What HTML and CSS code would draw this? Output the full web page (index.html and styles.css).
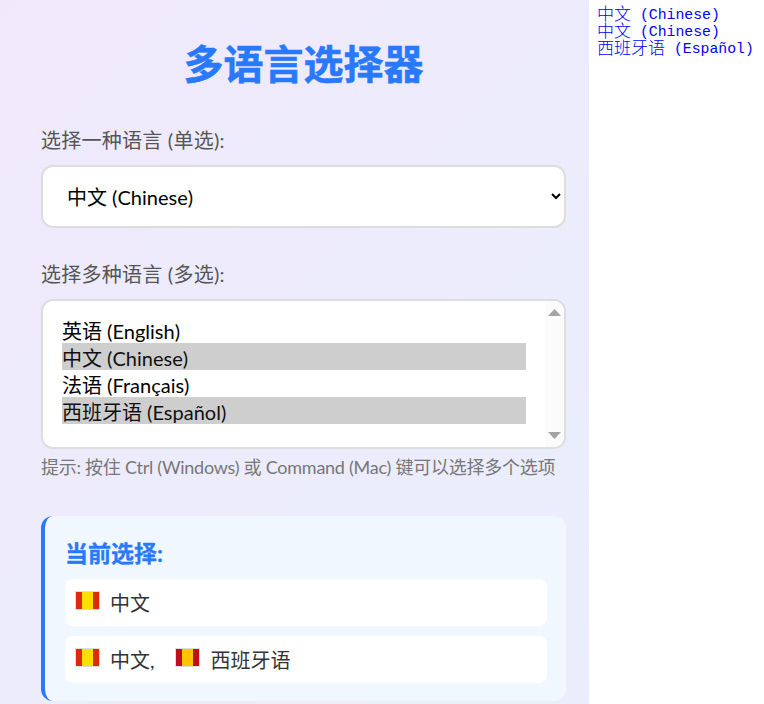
FILE: index.html
```html
<!DOCTYPE html>
<html lang="zh">
<head>
<meta charset="utf-8">
<title>多语言选择器</title>
<link rel="stylesheet" href="styles.css">
</head>
<body>
<main class="panel">
  <h1 class="title">多语言选择器</h1>
  <div class="group">
    <label class="label" for="single">选择一种语言 (单选):</label>
    <select class="field single" id="single">
      <option>英语 (English)</option>
      <option selected>中文 (Chinese)</option>
      <option>法语 (Français)</option>
      <option>西班牙语 (Español)</option>
    </select>
  </div>
  <div class="group">
    <label class="label" for="multi">选择多种语言 (多选):</label>
    <div class="multi-wrap">
      <select class="field multi" id="multi" multiple>
        <option>英语 (English)</option>
        <option selected>中文 (Chinese)</option>
        <option>法语 (Français)</option>
        <option selected>西班牙语 (Español)</option>
      </select>
      <div class="scrollbar" aria-hidden="true">
        <svg class="arrow" viewBox="0 0 13 7"><path d="M6.5 0 13 7H0z"/></svg>
        <svg class="arrow" viewBox="0 0 13 7"><path d="M0 0h13L6.5 7z"/></svg>
      </div>
    </div>
    <p class="hint">提示: 按住 Ctrl (Windows) 或 Command (Mac) 键可以选择多个选项</p>
  </div>
  <section class="result">
    <h2 class="result-title">当前选择:</h2>
    <div class="result-row"><span class="flag flag-cn"></span><span>中文</span></div>
    <div class="result-row"><span class="flag flag-cn"></span><span>中文,</span><span class="flag flag-es second"></span><span>西班牙语</span></div>
  </section>
</main>
<aside class="log">
  <div><span class="log-cjk">中文</span><span class="log-latin"> (Chinese)</span></div>
  <div><span class="log-cjk">中文</span><span class="log-latin"> (Chinese)</span></div>
  <div><span class="log-cjk">西班牙语</span><span class="log-latin"> (Español)</span></div>
</aside>
</body>
</html>
```
FILE: styles.css
```css
html, body { margin: 0; padding: 0; }
body {
  display: flex;
  align-items: flex-start;
  height: 704px;
  overflow: hidden;
  background: #fff;
  font-family: Lato, "Noto Sans CJK SC", sans-serif;
}
.panel {
  box-sizing: border-box;
  width: 589px;
  height: 704px;
  flex: none;
  padding: 32px 23px 0 41px;
  background: linear-gradient(135deg, #f0e9fb 0%, #e9eefc 100%);
}
.title {
  margin: 0 0 29px;
  text-align: center;
  font-size: 40px;
  line-height: 64px;
  font-weight: 700;
  color: #2979ff;
  -webkit-text-stroke: 0.5px #2979ff;
}
.group { margin-bottom: 31px; }
.label {
  display: block;
  margin-bottom: 10px;
  font-size: 20px;
  line-height: 30px;
  letter-spacing: 0.25px;
  color: #555;
}
.field {
  box-sizing: border-box;
  display: block;
  width: 100%;
  border: 2px solid #ddd;
  border-radius: 12px;
  background: #fff;
  font-family: inherit;
  font-size: 20px;
  color: #000;
}
.single { height: 63px; padding: 0 20px; }
.multi-wrap { position: relative; }
.multi { height: 150px; padding: 15px 38px 15px 19px; overflow: hidden; }
.multi option { height: 27px; line-height: 27px; min-height: 27px; padding: 0; }
.scrollbar {
  position: absolute;
  top: 2px;
  right: 2px;
  bottom: 2px;
  width: 19px;
  display: flex;
  flex-direction: column;
  justify-content: space-between;
  align-items: center;
  padding: 8px 0 8px;
  box-sizing: border-box;
  background: #fbfbfb;
  border-radius: 0 10px 10px 0;
}
.arrow { width: 13px; height: 7px; fill: #a3a3a3; display: block; }
.hint {
  margin: 5px 0 0;
  font-size: 18px;
  line-height: 27px;
  letter-spacing: -0.25px;
  white-space: nowrap;
  color: #777;
}
.result {
  margin-top: 35px;
  padding: 19px 19px 18px 20px;
  background: #f0f7ff;
  border-left: 4px solid #2979ff;
  border-radius: 12px;
}
.result-title {
  margin: 0 0 8px;
  font-size: 23px;
  line-height: 36px;
  font-weight: 700;
  color: #2979ff;
  -webkit-text-stroke: 0.3px #2979ff;
}
.result-row {
  display: flex;
  align-items: center;
  height: 47px;
  margin-bottom: 10px;
  padding: 0 10px;
  background: #fff;
  border-radius: 8px;
  font-size: 20px;
  color: #333;
}
.result-row:last-child { margin-bottom: 0; }
.flag {
  box-sizing: border-box;
  width: 25px;
  height: 19px;
  margin: -4px 10px 0 0;
  border: 1px solid #ddd;
}
.flag-cn { background: linear-gradient(90deg, #de2910 0 26%, #ffde00 26% 74%, #de2910 74%); }
.flag-es { background: linear-gradient(90deg, #c60b1e 0 26%, #ffc400 26% 74%, #c60b1e 74%); }
.second { margin-left: 20px; margin-right: 11px; }
.log {
  padding: 4px 0 0 8px;
  color: #00f;
  white-space: nowrap;
}
.log div { line-height: 17px; height: 17px; }
.log-cjk { font-family: "Noto Sans CJK SC", sans-serif; font-size: 17px; font-weight: 300; }
.log-latin { font-family: "Liberation Mono", monospace; font-size: 14.8px; white-space: pre; vertical-align: 1px; }
```
